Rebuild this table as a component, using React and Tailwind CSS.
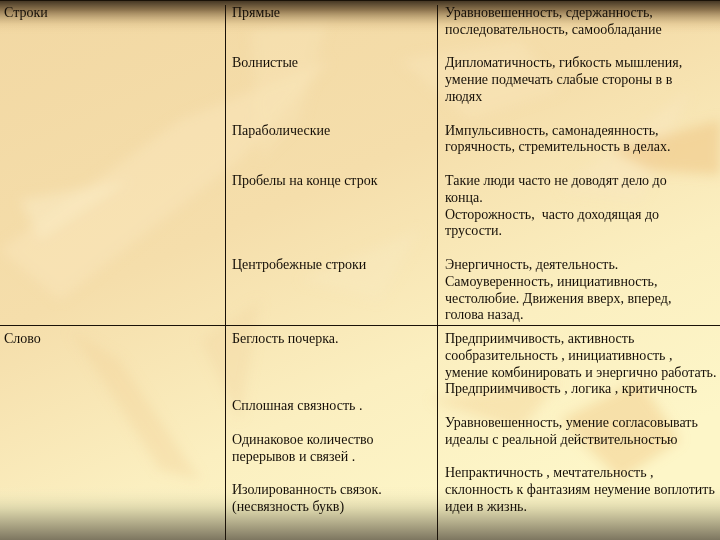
import React from 'react';

const rowsTop = [
  { kind: 'Прямые', lines: ['Уравновешенность, сдержанность,', 'последовательность, самообладание'] },
  { kind: 'Волнистые', lines: ['Дипломатичность, гибкость мышления,', 'умение подмечать слабые стороны в в', 'людях'] },
  { kind: 'Параболические', lines: ['Импульсивность, самонадеянность,', 'горячность, стремительность в делах.'] },
  {
    kind: 'Пробелы на конце строк',
    lines: ['Такие люди часто не доводят дело до', 'конца.', 'Осторожность,  часто доходящая до', 'трусости.'],
  },
  {
    kind: 'Центробежные строки',
    lines: ['Энергичность, деятельность.', 'Самоуверенность, инициативность,', 'честолюбие. Движения вверх, вперед,', 'голова назад.'],
  },
];

// фон слайда: бежевые листья
const Backdrop = () => (
  <svg className="absolute inset-0 w-full h-full" viewBox="0 0 720 540" preserveAspectRatio="none">
    <defs>
      <linearGradient id="base" x1="0" y1="0" x2="0.6" y2="1">
        <stop offset="0" stopColor="#f2d8a3" />
        <stop offset="0.45" stopColor="#f5deab" />
        <stop offset="0.75" stopColor="#fbefc0" />
        <stop offset="1" stopColor="#fdf6c8" />
      </linearGradient>
      <linearGradient id="top" x1="0" y1="0" x2="0" y2="1">
        <stop offset="0" stopColor="#3e3120" />
        <stop offset="0.3" stopColor="#8f7650" />
        <stop offset="0.7" stopColor="#dcc08c" stopOpacity="0.6" />
        <stop offset="1" stopColor="#f1d7a2" stopOpacity="0" />
      </linearGradient>
      <linearGradient id="bottom" x1="0" y1="0" x2="0" y2="1">
        <stop offset="0" stopColor="#fbf3c4" stopOpacity="0" />
        <stop offset="0.45" stopColor="#d8d2a8" />
        <stop offset="1" stopColor="#7d7660" />
      </linearGradient>
      <filter id="soft" x="-20%" y="-20%" width="140%" height="140%">
        <feGaussianBlur stdDeviation="6" />
      </filter>
    </defs>
    <rect width="720" height="540" fill="url(#base)" />
    <g filter="url(#soft)">
      <path d="M0 250 L180 120 L330 60 L240 160 L60 300 Z" fill="#f9e6ba" opacity="0.55" />
      <path d="M20 200 L130 180 L40 240 Z" fill="#faebc4" opacity="0.55" />
      <path d="M250 30 L330 10 L300 120 L260 160 Z" fill="#f8e4b6" opacity="0.5" />
      <path d="M400 60 L520 40 L560 90 L470 120 Z" fill="#f9e6ba" opacity="0.5" />
      <path d="M560 190 L690 90 L640 200 Z" fill="#f9e8bf" opacity="0.5" />
      <path d="M610 150 L720 120 L720 175 L650 170 Z" fill="#eec583" opacity="0.55" />
      <path d="M560 420 L640 380 L680 440 L620 480 Z" fill="#efc886" opacity="0.45" />
      <path d="M430 400 L560 380 L520 430 Z" fill="#f2d094" opacity="0.4" />
      <path d="M70 330 L120 360 L200 480 L160 470 Z" fill="#f2d29a" opacity="0.4" />
      <path d="M200 340 L260 300 L240 420 Z" fill="#f3d8a2" opacity="0.4" />
      <path d="M300 280 L420 230 L380 300 Z" fill="#f9e8bf" opacity="0.45" />
    </g>
    <rect width="720" height="34" fill="url(#top)" />
    <rect y="486" width="720" height="54" fill="url(#bottom)" />
  </svg>
);

const Para = ({ lines }) => (
  <div>
    {lines.map((l, i) => (
      <div key={i} className="whitespace-pre">{l}</div>
    ))}
  </div>
);

export default function App() {
  return (
    <div
      className="relative w-[720px] h-[540px] overflow-hidden text-[14px] leading-[16.8px] text-[#150f08]"
      style={{ fontFamily: '"Liberation Serif", "Times New Roman", serif' }}
    >
      <Backdrop />
      <div className="relative flex flex-col h-full border-t border-[#1a1208]">
        {/* Строки */}
        <div className="flex h-[325px] border-b-[1.5px] border-[#1a1208]">
          <div className="w-[225px] shrink-0 pl-[4px] pt-[4px]">Строки</div>
          <div className="flex-1 flex flex-col pt-[4px]">
            {rowsTop.map((r, i) => (
              <div key={i} className="flex">
                <div className="w-[212px] shrink-0 border-l-[1.5px] border-[#1a1208] pl-[6px] pb-[16.8px]">{r.kind}</div>
                <div className="flex-1 border-l-[1.5px] border-[#1a1208] pl-[7px] pb-[16.8px]">
                  <Para lines={r.lines} />
                </div>
              </div>
            ))}
            <div className="flex flex-1 -mt-[16.8px]">
              <div className="w-[212px] shrink-0 border-l-[1.5px] border-[#1a1208]" />
              <div className="flex-1 border-l-[1.5px] border-[#1a1208]" />
            </div>
          </div>
        </div>
        {/* Слово */}
        <div className="flex flex-1">
          <div className="w-[225px] shrink-0 pl-[4px] pt-[5px]">Слово</div>
          <div className="w-[212px] shrink-0 border-l-[1.5px] border-[#1a1208] pl-[6px] pt-[5px]">
            <div>Беглость почерка.</div>
            <div className="mt-[50.4px]">Сплошная связность .</div>
            <div className="mt-[16.8px]">Одинаковое количество</div>
            <div>перерывов и связей .</div>
            <div className="mt-[16.8px]">Изолированность связок.</div>
            <div>(несвязность букв)</div>
          </div>
          <div className="flex-1 border-l-[1.5px] border-[#1a1208] pl-[7px] pt-[5px]">
            <Para
              lines={[
                'Предприимчивость, активность',
                'сообразительность , инициативность ,',
                'умение комбинировать и энергично работать.',
                'Предприимчивость , логика , критичность',
              ]}
            />
            <div className="mt-[16.8px]">
              <Para lines={['Уравновешенность, умение согласовывать', 'идеалы с реальной действительностью']} />
            </div>
            <div className="mt-[16.8px]">
              <Para
                lines={[
                  'Непрактичность , мечтательность ,',
                  'склонность к фантазиям неумение воплотить',
                  'идеи в жизнь.',
                ]}
              />
            </div>
          </div>
        </div>
      </div>
    </div>
  );
}
